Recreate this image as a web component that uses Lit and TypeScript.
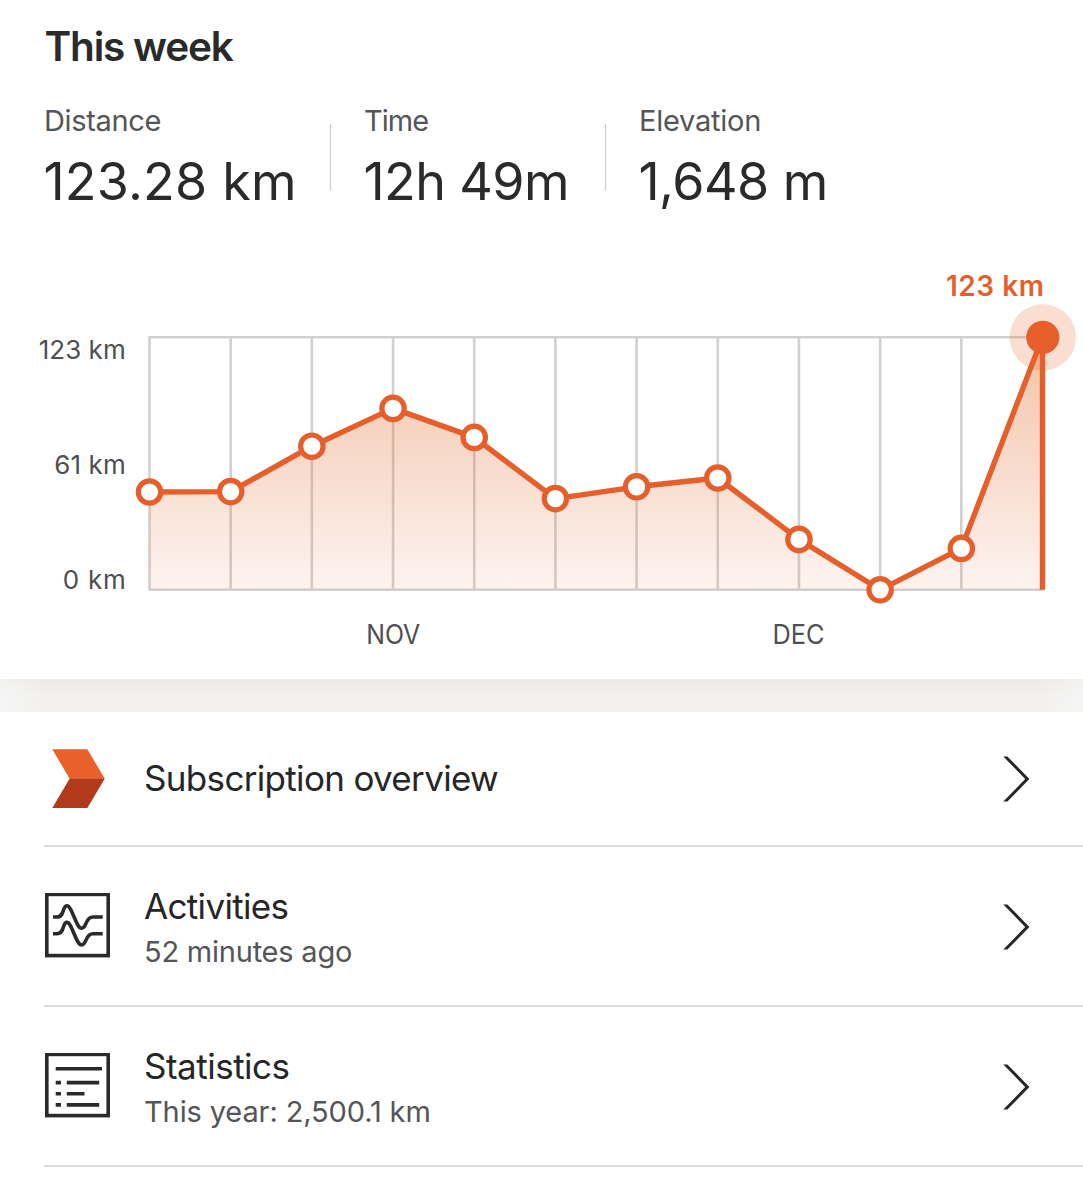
import { LitElement, html, svg, css, nothing } from "lit";
import { customElement, property } from "lit/decorators.js";

const LEFT = 149.5;
const RIGHT = 1042.5;
const TOP = 337.3;
const BOTTOM = 589.8;
const LEVELS = [492, 491.6, 446.2, 408.4, 437.4, 498.6, 486.8, 478, 539.4, 589.8, 548.4, 337.3];
const STEP = (RIGHT - LEFT) / (LEVELS.length - 1);
const px = (i: number) => LEFT + STEP * i;

@customElement("weekly-chart")
class WeeklyChart extends LitElement {
  static styles = css`
    :host { display: block; }
    svg { display: block; font-family: Inter, "Liberation Sans", sans-serif; }
    .grid { stroke: #d3d1cf; stroke-width: 2.6; fill: none; }
    .line { stroke: #e65f2b; stroke-width: 5.4; fill: none; stroke-linejoin: round; }
    .dot { stroke: #e65f2b; stroke-width: 5.2; fill: #fff; }
    .halo { fill: #e8672f; fill-opacity: 0.22; }
    .now { fill: #e65f2b; }
    .axis { fill: #4f4f51; font-size: 26px; }
    .month { fill: #4f4f51; font-size: 26.5px; }
    .current { fill: #e65f2b; font-size: 28px; font-weight: 600; }
  `;
  render() {
    const pts = LEVELS.map((y, i) => `${px(i)},${y}`);
    return html`
      <svg width="1083" height="467" viewBox="0 212 1083 467">
        <defs>
          <linearGradient id="fade" gradientUnits="userSpaceOnUse" x1="0" y1=${TOP} x2="0" y2=${BOTTOM}>
            <stop offset="0" stop-color="#e26d28" stop-opacity="0.42" />
            <stop offset="1" stop-color="#e2703f" stop-opacity="0.08" />
          </linearGradient>
        </defs>
        <rect class="grid" x=${LEFT} y=${TOP} width=${RIGHT - LEFT} height=${BOTTOM - TOP} stroke-linejoin="round" />
        ${LEVELS.slice(2).map((_, i) => svg`<path class="grid" d=${`M${px(i + 1)} ${TOP}V${BOTTOM}`} />`)}
        <polygon fill="url(#fade)" points=${`${LEFT},${BOTTOM} ${pts.join(" ")} ${RIGHT},${BOTTOM}`} />
        <circle class="halo" cx=${RIGHT + 0.3} cy=${TOP} r="33.2" />
        <polyline class="line" points=${`${pts.join(" ")} ${RIGHT},${BOTTOM}`} />
        ${LEVELS.slice(0, -1).map((y, i) => svg`<circle class="dot" cx=${px(i)} cy=${y} r="11.2" />`)}
        <circle class="now" cx=${RIGHT + 0.3} cy=${TOP} r="16.6" />
        <text class="axis" text-anchor="end" x="125.7" y="359.4" textLength="87">123 km</text>
        <text class="axis" text-anchor="end" x="125.7" y="474.2" textLength="71.5">61 km</text>
        <text class="axis" text-anchor="end" x="125.7" y="588.9" textLength="63">0 km</text>
        <text class="month" text-anchor="middle" x="393.2" y="643.8" textLength="54" lengthAdjust="spacingAndGlyphs">NOV</text>
        <text class="month" text-anchor="middle" x="798.5" y="643.8" textLength="52" lengthAdjust="spacingAndGlyphs">DEC</text>
        <text class="current" text-anchor="end" x="1044" y="295.8" textLength="98">123 km</text>
      </svg>
    `;
  }
}

const ICONS: Record<string, unknown> = {
  subscription: svg`
    <path fill="#e9602b" d="M7.3 3.3H42.4L59.8 32.7H24.7Z" />
    <path fill="#b13a1a" d="M24.7 32.5H59.8L42.4 61.9H7.3Z" />`,
  activities: svg`
    <g fill="none" stroke="#2a2a2b" stroke-width="3.6">
      <rect x="1.8" y="1.4" width="61.4" height="61.2" />
      <path d="M8 24H12C20 24 17 12.7 22 12.7S31 35.2 36.5 35.2S40 24 48 24H57.7" />
      <path d="M8 40.7H12C20 40.7 17 29.4 22 29.4S31 51.9 36.5 51.9S40 40.7 48 40.7H57.7" />
    </g>`,
  statistics: svg`
    <g fill="none" stroke="#2a2a2b" stroke-width="3.6">
      <rect x="1.8" y="1.4" width="61.4" height="61.2" />
      <path d="M10.7 15.8H57M10.7 29.6H16M21.8 29.6H54.2M10.7 40.8H16M21.8 40.8H39.5M10.7 51.9H16M21.8 51.9H54.2" />
    </g>`,
};

@customElement("menu-row")
class MenuRow extends LitElement {
  @property() icon = "";
  @property() heading = "";
  @property() detail = "";
  static styles = css`
    :host { display: block; padding-left: 44px; }
    .row { display: flex; align-items: center; height: 100%; box-sizing: border-box; border-bottom: 2px solid #dcdcde; padding-right: 53px; }
    .icon { flex: none; width: 66px; height: 66px; margin: 0 33px 0 1px; }
    .text { flex: 1; white-space: nowrap; padding-top: 2px; }
    .text.single { padding: 0 0 2px; }
    .heading { font-size: 35px; line-height: 46px; color: #262628; }
    .detail { font-size: 29px; line-height: 40px; margin-top: 3px; color: #555557; }
    .chevron { flex: none; padding-top: 2px; }
    .single + .chevron { padding-top: 0; }
    .h-subscription { letter-spacing: -0.67px; }
    .h-activities { letter-spacing: -0.67px; }
    .h-statistics { letter-spacing: -0.5px; }
    .d-activities { letter-spacing: -0.22px; }
    .d-statistics { letter-spacing: -0.12px; }
  `;
  render() {
    return html`
      <div class="row">
        <svg class="icon" viewBox="0 0 66 66">${ICONS[this.icon]}</svg>
        <div class="text ${this.detail ? "" : "single"}">
          <div class="heading h-${this.icon}">${this.heading}</div>
          ${this.detail ? html`<div class="detail d-${this.icon}">${this.detail}</div>` : nothing}
        </div>
        <svg class="chevron" width="27" height="46" viewBox="0 0 27 46">
          <path fill="#262628" d="M0.3 0.5H4.4L26.4 23L4.4 45.5H0.3L22.2 23Z" />
        </svg>
      </div>
    `;
  }
}

@customElement("app-root")
class AppRoot extends LitElement {
  static styles = css`
    :host { display: block; width: 1083px; height: 1200px; overflow: hidden; background: #fff; font-family: Inter, "Liberation Sans", sans-serif; }
    .week { height: 679px; box-sizing: border-box; padding-top: 23px; }
    .title { margin: 0 0 32px 44.5px; font-size: 40.5px; line-height: 48px; font-weight: 600; color: #2a2a2b; letter-spacing: -1.2px; }
    .stats { display: flex; height: 109px; padding-left: 43.5px; white-space: nowrap; }
    .stat.distance { width: 286px; }
    .stat.time { width: 241px; }
    .label { padding-left: 0.5px; font-size: 29px; line-height: 36px; color: #555557; }
    .value { margin-top: 13px; font-size: 52px; line-height: 60px; color: #2a2a2b; }
    .rule { flex: none; width: 1.5px; height: 66px; margin: 20.5px 32.5px 0 0; background: #c9c9c9; }
    .distance .label { letter-spacing: -0.35px; }
    .time .label { letter-spacing: -1px; }
    .elevation .label { letter-spacing: -0.25px; }
    .distance .value { letter-spacing: 0.2px; }
    .time .value { letter-spacing: -0.6px; }
    .elevation .value { letter-spacing: -0.55px; }
    .band { height: 33px; background: linear-gradient(90deg, rgba(255,255,255,.35), rgba(255,255,255,0) 4%, rgba(255,255,255,0) 96%, rgba(255,255,255,.35)), linear-gradient(#ecebe8, #f1f0ef 45%, #f2f1f0); }
    .first { height: 135px; }
    .tall { height: 160px; }
  `;
  render() {
    return html`
      <section class="week">
        <h1 class="title">This week</h1>
        <div class="stats">
          <div class="stat distance"><div class="label">Distance</div><div class="value">123.28 km</div></div>
          <div class="rule"></div>
          <div class="stat time"><div class="label">Time</div><div class="value">12h 49m</div></div>
          <div class="rule"></div>
          <div class="stat elevation"><div class="label">Elevation</div><div class="value">1,648 m</div></div>
        </div>
        <weekly-chart></weekly-chart>
      </section>
      <div class="band"></div>
      <nav>
        <menu-row class="first" icon="subscription" heading="Subscription overview"></menu-row>
        <menu-row class="tall" icon="activities" heading="Activities" detail="52 minutes ago"></menu-row>
        <menu-row class="tall" icon="statistics" heading="Statistics" detail="This year: 2,500.1 km"></menu-row>
      </nav>
    `;
  }
}
